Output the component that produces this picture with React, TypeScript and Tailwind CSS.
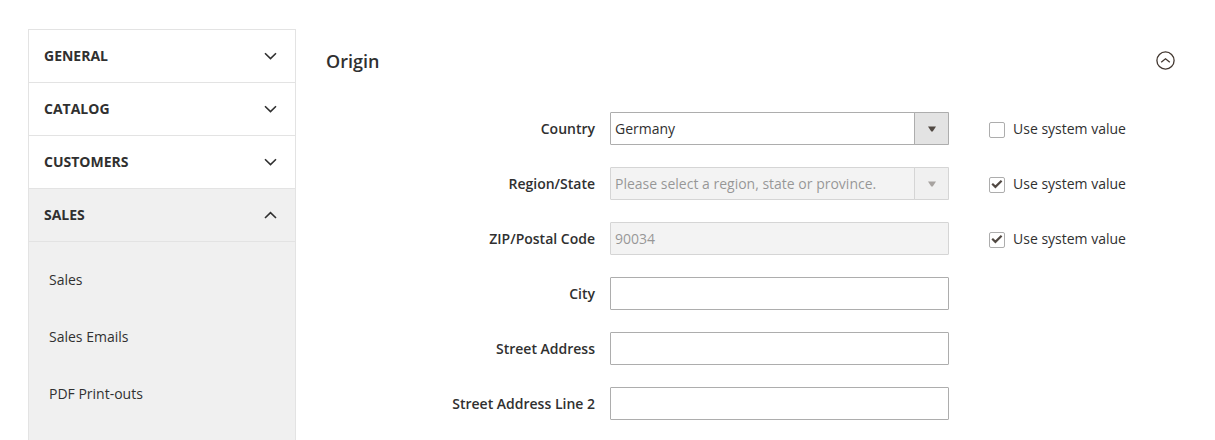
import { useState } from "react";

type Field = {
  id: string;
  label: string;
  kind: "select" | "text";
  value: string;
  system?: boolean;
};

const sections = ["General", "Catalog", "Customers", "Sales"];
const salesPages = ["Sales", "Sales Emails", "PDF Print-outs"];

const originFields: Field[] = [
  { id: "country", label: "Country", kind: "select", value: "Germany", system: false },
  {
    id: "region",
    label: "Region/State",
    kind: "select",
    value: "Please select a region, state or province.",
    system: true,
  },
  { id: "postcode", label: "ZIP/Postal Code", kind: "text", value: "90034", system: true },
  { id: "city", label: "City", kind: "text", value: "" },
  { id: "street1", label: "Street Address", kind: "text", value: "" },
  { id: "street2", label: "Street Address Line 2", kind: "text", value: "" },
];

function Chevron({ up }: { up: boolean }) {
  return (
    <svg width="13" height="8" viewBox="0 0 13 8" fill="none" stroke="#303030" strokeWidth="1.6" aria-hidden="true">
      <path d={up ? "M1 7 L6.5 1.6 L12 7" : "M1 1.2 L6.5 6.6 L12 1.2"} />
    </svg>
  );
}

function Sidebar() {
  const [open, setOpen] = useState("Sales");
  return (
    <nav className="flex w-[268px] shrink-0 flex-col border border-b-0 border-[#e3e3e3] bg-[#f0f0f0]">
      {sections.map((name) => (
        <button
          key={name}
          type="button"
          aria-expanded={open === name}
          onClick={() => setOpen(name)}
          className={`flex h-[53px] shrink-0 items-center justify-between border-b border-[#e3e3e3] pr-[18px] pl-[15px] font-bold uppercase ${
            open === name ? "bg-[#f0f0f0]" : "bg-white"
          }`}
        >
          <span>{name}</span>
          <Chevron up={open === name} />
        </button>
      ))}
      {open === "Sales" && (
        <ul className="pt-[9px]">
          {salesPages.map((page) => (
            <li key={page}>
              <a href="#" className="flex h-[57px] items-center px-5 hover:bg-[#e8e8e8]">
                {page}
              </a>
            </li>
          ))}
        </ul>
      )}
    </nav>
  );
}

function FieldRow({ field }: { field: Field }) {
  const [useSystem, setUseSystem] = useState(field.system === true);
  const [value, setValue] = useState(field.value);
  const box = "h-[33px] w-full rounded-[1px] border border-[#adadad] text-[#303030]";

  return (
    <div className="grid grid-cols-[284fr_339fr_236fr] items-center">
      <label htmlFor={field.id} className="pr-[15px] text-right font-semibold">
        {field.label}
      </label>
      <div className={`relative ${useSystem ? "opacity-50" : ""}`}>
        {field.kind === "select" ? (
          <>
            <select
              id={field.id}
              disabled={useSystem}
              className={`${box} appearance-none pr-10 pl-1 ${useSystem ? "bg-[#e9e9e9]" : "bg-white"}`}
            >
              <option>{field.value}</option>
            </select>
            <span className="pointer-events-none absolute inset-y-0 right-0 flex w-[35px] items-center justify-center rounded-r-[1px] border border-[#adadad] bg-[#e3e3e3]">
              <svg width="8" height="6" viewBox="0 0 8 6" fill="#514943" aria-hidden="true">
                <path d="M0 0.5 H8 L4.7 5.6 H3.3 Z" />
              </svg>
            </span>
          </>
        ) : (
          <input
            id={field.id}
            type="text"
            disabled={useSystem}
            value={value}
            onChange={(e) => setValue(e.target.value)}
            className={`${box} px-1 ${useSystem ? "bg-[#e9e9e9]" : "bg-white"}`}
          />
        )}
      </div>
      {field.system !== undefined && (
        <div className="flex items-center gap-2 pl-10">
          <span className="relative mt-[3px] flex size-4">
            <input
              id={`${field.id}-system`}
              type="checkbox"
              checked={useSystem}
              onChange={(e) => setUseSystem(e.target.checked)}
              className="size-4 appearance-none rounded-[2px] border border-[#adadad] bg-white"
            />
            {useSystem && (
              <svg
                className="pointer-events-none absolute inset-0"
                width="16"
                height="16"
                viewBox="0 0 16 16"
                fill="none"
                stroke="#514943"
                strokeWidth="2.2"
                aria-hidden="true"
              >
                <path d="M3.2 6.8 L6.4 9.9 L12.6 3.8" />
              </svg>
            )}
          </span>
          <label htmlFor={`${field.id}-system`}>Use system value</label>
        </div>
      )}
    </div>
  );
}

export default function App() {
  const [expanded, setExpanded] = useState(true);
  return (
    <div className="flex h-screen gap-[30px] overflow-hidden bg-white pt-[29px] pr-[30px] pl-7 font-['Open_Sans','Noto_Sans',sans-serif] text-sm text-[#303030]">
      <Sidebar />
      <main className="min-w-0 flex-1">
        <header className="flex h-[63px] items-center justify-between pr-[10px]">
          <h1 className="text-lg/6 font-semibold">Origin</h1>
          <button
            type="button"
            aria-label="Toggle Origin section"
            aria-expanded={expanded}
            onClick={() => setExpanded(!expanded)}
          >
            <svg width="19" height="19" viewBox="0 0 19 19" fill="none" stroke="#41362f" strokeWidth="1.3" aria-hidden="true">
              <circle cx="9.5" cy="9.5" r="8.6" />
              <path d={expanded ? "M5.2 11.2 L9.5 7.8 L13.8 11.2" : "M5.2 7.8 L9.5 11.2 L13.8 7.8"} />
            </svg>
          </button>
        </header>
        {expanded && (
          <form className="flex flex-col gap-[22px] pt-5">
            {originFields.map((field) => (
              <FieldRow key={field.id} field={field} />
            ))}
          </form>
        )}
      </main>
    </div>
  );
}
